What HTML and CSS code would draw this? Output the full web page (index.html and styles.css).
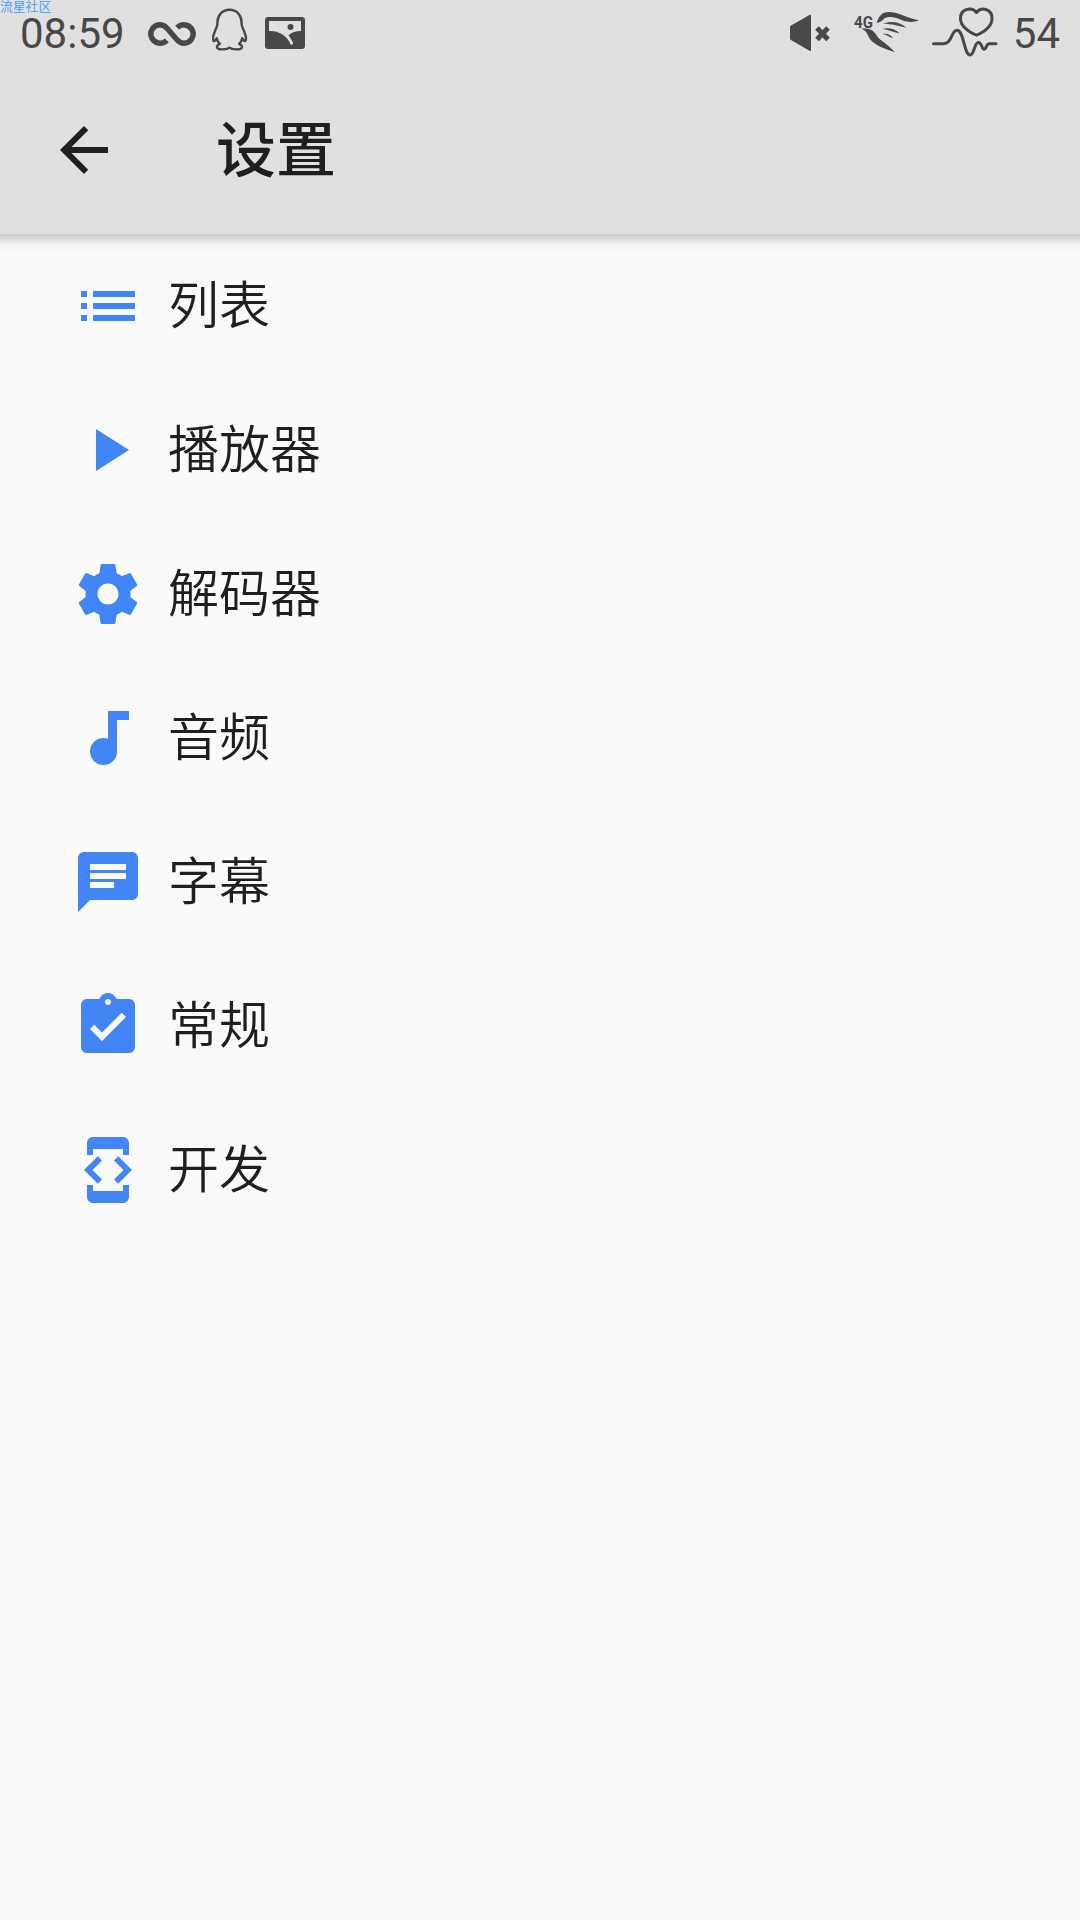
FILE: index.html
```
<!DOCTYPE html>
<html lang="zh-CN">
<head>
<meta charset="UTF-8">
<meta name="viewport" content="width=device-width, initial-scale=1.0">
<title>设置</title>
<link rel="stylesheet" href="styles.css">
</head>
<body>
<div class="watermark">流星社区</div>
<header class="header">
  <div class="status-bar">
    <span class="time">08:59</span>
    <svg class="icon-infinity" width="48" height="66" viewBox="0 0 48 66">
      <path d="M18.8 40.3A9.2 9.2 0 1 1 12 24.8C15.5 24.8 17.5 26.5 19.5 28.8L28.5 39.2C30.5 41.5 32.5 43.2 36 43.2A9.2 9.2 0 1 0 29.2 27.7"/>
    </svg>
    <svg class="icon-qq" width="36" height="66" viewBox="0 0 36 66">
      <path d="M17.5 9.8C9.5 9.8 5 16 5.4 24C5.4 27 3.8 28.5 2.6 32C1 36 .6 39.5 1.6 40.8C2.6 41.8 4 39.5 4.8 38.2C5.2 40.5 6.4 42.5 7.8 43.8C5.6 44.8 4.4 46.5 5.4 48C7 50 15 49.8 17.5 47.6C20 49.8 28 50 29.6 48C30.6 46.5 29.4 44.8 27.2 43.8C28.6 42.5 29.8 40.5 30.2 38.2C31 39.5 32.4 41.8 33.4 40.8C34.4 39.5 34 36 32.4 32C31.2 28.5 29.6 27 29.6 24C30 16 25.5 9.8 17.5 9.8Z"/>
    </svg>
    <svg class="icon-image" width="40" height="66" viewBox="0 0 40 66">
      <path fill-rule="evenodd" d="M3 17H37Q40 17 40 20V46Q40 49 37 49H3Q0 49 0 46V20Q0 17 3 17ZM4 21V31C13 30.500 22 35 26 45L28.300 43.800C27 40.500 25.800 38.300 23.500 35.300C27 32.300 31 31 36 31V21Z"/>
      <circle cx="25.500" cy="27" r="3"/>
    </svg>
    <div class="status-right">
      <svg class="icon-mute" width="41" height="66" viewBox="0 0 41 66">
        <path d="M0 27Q0 26 1 25.500L19.500 15Q21 14.300 21 16V50Q21 51.500 19.500 50.700L1 40Q0 39.500 0 38.500Z"/>
        <path class="cross" d="M27 28L38 39.500M38 28L27 39.500"/>
      </svg>
      <svg class="icon-signal" width="66" height="66" viewBox="0 0 66 66">
        <text x="0" y="28" textLength="19" lengthAdjust="spacingAndGlyphs">4G</text>
        <path d="M22.500 22.800C24 19 26 14.500 29.500 13C34 11 42 12.500 48 15C53 17 59 19.200 65 20.300C60 22.400 54 22.500 49 20.500C43 18 36 15.500 31 18C28.500 19.500 28.500 22 22.500 22.800Z"/>
        <path d="M29 23.800C37 20.500 46 22 52.500 27.700C45 26.300 38 23.800 29 23.800Z"/>
        <path d="M28 29C34.500 27.200 41 28.700 45.500 33.200C39 32.500 35 29.700 28 29Z"/>
        <path d="M28 34C32 33 36.500 34 39 38C35 37.200 33 34.700 28 34Z"/>
        <path d="M7.500 28.700C13 28 19 29 22 34.500C25.500 41 33 43 41 52.300C29.500 48.500 17 44 14 35.500C13 32.500 11 30 7.500 28.700Z"/>
      </svg>
      <svg class="icon-pulse" width="66" height="66" viewBox="0 0 66 66">
        <path d="M1.500 43.700H11C20.500 43.700 19 30.300 25 30.300C32 30.300 32 55 38 55C42.500 55 42 42.500 46.500 42.500C50 42.500 49.500 49.200 52 49.200C55 49.200 53.500 43.700 57.500 43.700H64"/>
        <path d="M44.500 12.500C40 6.500 28.500 8.500 28.500 18.500C28.500 26.500 36 31.500 44.500 35.200C53 31.500 60 26.500 60 18.500C60 8.500 49 6.500 44.500 12.500Z"/>
      </svg>
      <span class="battery">54</span>
    </div>
  </div>
  <div class="toolbar">
    <svg class="icon" viewBox="0 0 24 24"><path d="M20 11H7.830l5.590-5.590L12 4l-8 8 8 8 1.410-1.410L7.830 13H20v-2z"/></svg>
    <h1>设置</h1>
  </div>
</header>

<ul class="settings">
  <li>
    <svg class="icon" viewBox="0 0 24 24"><path d="M3 13h2v-2H3v2zm0 4h2v-2H3v2zm0-8h2V7H3v2zm4 4h14v-2H7v2zm0 4h14v-2H7v2zM7 7v2h14V7H7z"/></svg>
    <span>列表</span>
  </li>
  <li>
    <svg class="icon" viewBox="0 0 24 24"><path d="M8 5v14l11-7z"/></svg>
    <span>播放器</span>
  </li>
  <li>
    <svg class="icon" viewBox="0 0 24 24"><path d="M19.430 12.980c.04-.32.07-.64.07-.98s-.03-.66-.07-.98l2.110-1.650c.19-.15.24-.42.12-.64l-2-3.460c-.12-.22-.39-.3-.61-.22l-2.490 1c-.52-.4-1.080-.73-1.690-.98l-.38-2.650C14.460 2.180 14.250 2 14 2h-4c-.25 0-.46.18-.49.42l-.38 2.650c-.61.25-1.170.59-1.690.98l-2.490-1c-.23-.09-.49 0-.61.22l-2 3.460c-.13.22-.07.49.12.64l2.110 1.650c-.04.32-.07.65-.07.98s.03.66.07.98l-2.110 1.650c-.19.15-.24.42-.12.64l2 3.460c.12.22.39.3.61.22l2.490-1c.52.4 1.080.73 1.690.98l.38 2.650c.03.24.24.42.49.42h4c.25 0 .46-.18.49-.42l.38-2.650c.61-.25 1.170-.59 1.690-.98l2.490 1c.23.09.49 0 .61-.22l2-3.460c.12-.22.07-.49-.12-.64l-2.110-1.650zM12 15.500c-1.930 0-3.500-1.570-3.500-3.500s1.570-3.500 3.500-3.500 3.500 1.570 3.500 3.500-1.570 3.500-3.500 3.500z"/></svg>
    <span>解码器</span>
  </li>
  <li>
    <svg class="icon" viewBox="0 0 24 24"><path d="M12 3v9.280c-.47-.17-.97-.28-1.500-.28C8.010 12 6 14.010 6 16.500S8.010 21 10.500 21c2.310 0 4.500-1.750 4.500-4.500V6h4V3h-7z"/></svg>
    <span>音频</span>
  </li>
  <li>
    <svg class="icon" viewBox="0 0 24 24"><path d="M20 2H4c-1.100 0-1.990.9-1.990 2L2 22l4-4h14c1.100 0 2-.9 2-2V4c0-1.100-.9-2-2-2zM6 9h12v2H6V9zm8 5H6v-2h8v2zm4-6H6V6h12v2z"/></svg>
    <span>字幕</span>
  </li>
  <li>
    <svg class="icon" viewBox="0 0 24 24"><path d="M19 3h-4.180C14.400 1.840 13.300 1 12 1c-1.300 0-2.400.84-2.820 2H5c-1.100 0-2 .9-2 2v14c0 1.100.9 2 2 2h14c1.100 0 2-.9 2-2V5c0-1.100-.9-2-2-2zm-7 0c.55 0 1 .45 1 1s-.45 1-1 1-1-.45-1-1 .45-1 1-1zm-2 14l-4-4 1.410-1.410L10 14.170l6.590-6.590L18 9l-8 8z"/></svg>
    <span>常规</span>
  </li>
  <li>
    <svg class="icon" viewBox="0 0 24 24"><path d="M7 5h10v2h2V3c0-1.100-.9-1.990-2-1.990L7 1c-1.100 0-2 .9-2 2v4h2V5zm8.410 11.590L20 12l-4.590-4.590L14 8.830 17.170 12 14 15.170l1.410 1.420zM10 15.170L6.830 12 10 8.830 8.590 7.410 4 12l4.590 4.590L10 15.170zM17 19H7v-2H5v4c0 1.100.9 2 2 2h10c1.100 0 2-.9 2-2v-4h-2v2z"/></svg>
    <span>开发</span>
  </li>
</ul>
</body>
</html>
```
FILE: styles.css
```
* {
  margin: 0;
  padding: 0;
  box-sizing: border-box;
}
body {
  min-height: 1920px;
  background-color: #fafafa;
  font-family: Roboto, "Noto Sans CJK SC", sans-serif;
  color: #1f1f1f;
}
svg {
  display: block;
  flex: none;
}
.watermark {
  position: absolute;
  top: 0;
  left: 0;
  z-index: 1;
  font-size: 12.8px;
  font-weight: 350;
  line-height: 13px;
  color: #3fa0ec;
}
.header {
  height: 234px;
  background-color: #e0e0e0;
  box-shadow: 0 -8px 12px 12px rgba(0, 0, 0, 0.25);
}

/* Status bar */
.status-bar {
  display: flex;
  align-items: center;
  height: 66px;
  padding: 0 20px;
  color: #484848;
  fill: #484848;
}
.time,
.battery {
  padding-top: 2px;
  font-size: 42px;
  line-height: 66px;
}
.time {
  width: 128px;
}
.battery {
  height: 66px;
  margin-left: 15px;
  padding-top: 1px;
}
.icon-infinity {
  fill: none;
  stroke: #484848;
  stroke-width: 5.5;
}
.icon-qq {
  margin-left: 16px;
  fill: none;
  stroke: #484848;
  stroke-width: 2.4;
  stroke-linejoin: round;
}
.icon-image {
  margin-left: 17px;
}
.status-right {
  display: flex;
  margin-left: auto;
}
.cross {
  stroke: #484848;
  stroke-width: 5;
}
.icon-signal {
  margin-left: 23px;
}
.icon-signal text {
  font-size: 16px;
  font-weight: 700;
}
.icon-pulse {
  margin-left: 12px;
  fill: none;
  stroke: #484848;
  stroke-width: 3;
  stroke-linecap: round;
  stroke-linejoin: round;
}

/* Toolbar */
.icon {
  width: 72px;
  height: 72px;
}
.toolbar {
  display: flex;
  align-items: center;
  height: 168px;
  padding-left: 48px;
  fill: #1f1f1f;
}
.toolbar h1 {
  margin-left: 96px;
  padding-top: 4px;
  font-size: 60px;
  font-weight: 500;
  line-height: 84px;
}

/* Settings list */
.settings {
  list-style: none;
}
.settings li {
  display: flex;
  align-items: center;
  height: 144px;
  padding-left: 72px;
}
.settings .icon {
  fill: #4285f4;
}
.settings span {
  margin-left: 24px;
  padding-top: 1px;
  font-size: 51px;
  font-weight: 350;
  line-height: 72px;
}
```
